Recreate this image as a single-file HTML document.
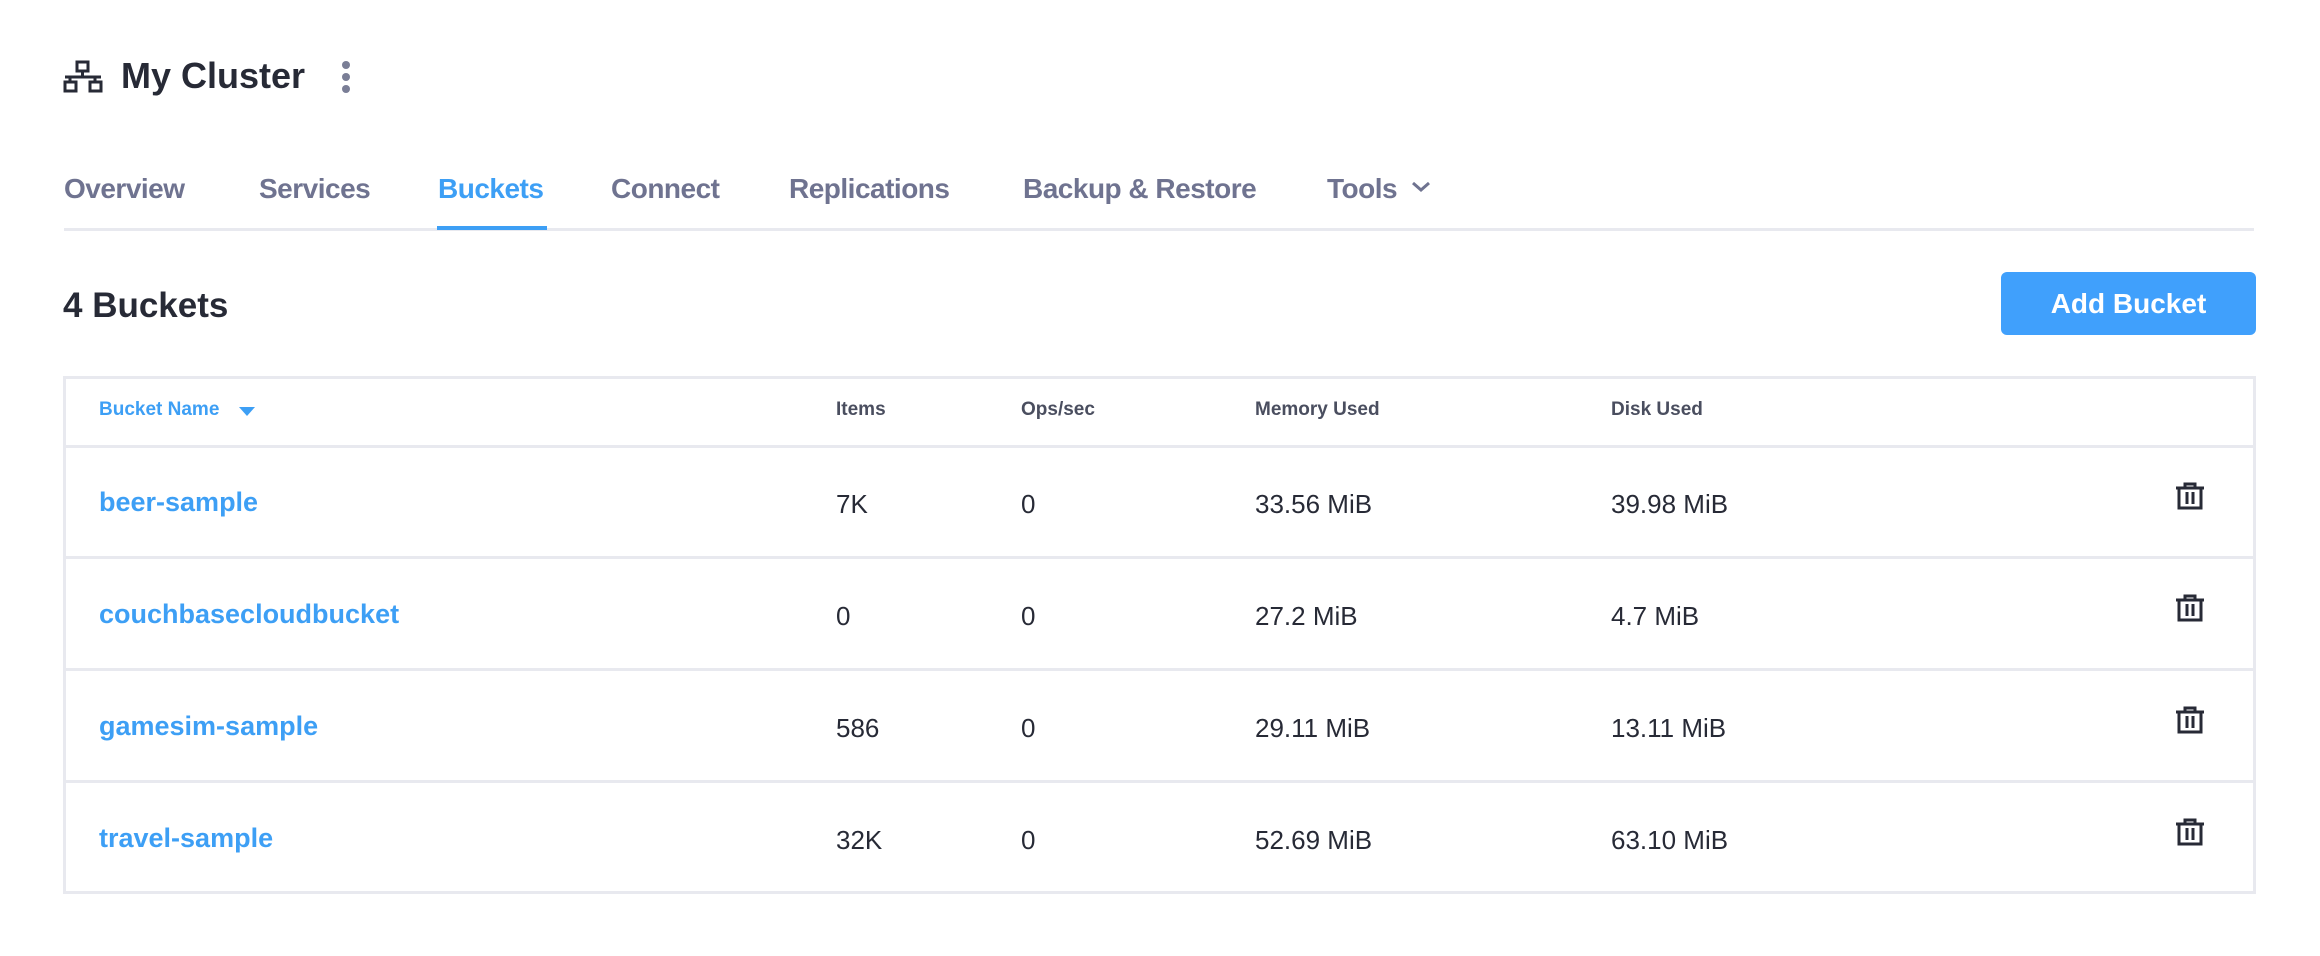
<!DOCTYPE html>
<html><head><meta charset="utf-8"><style>
*{margin:0;padding:0;box-sizing:border-box}
body{width:2320px;height:956px;background:#fff;font-family:"Liberation Sans",sans-serif;position:relative;overflow:hidden;color:#272a36}
.a{position:absolute;white-space:nowrap}
.nav{font-size:28px;color:#6f7390;top:171px;line-height:36px;font-weight:bold;letter-spacing:-0.5px}
.hd{font-size:19px;color:#4a4e5f;font-weight:bold;top:398px;line-height:24px}
.ln{position:absolute;left:64px;width:2190px;height:3px;background:#e8e9ef}
.nm{font-size:27px;color:#3d9ff5;font-weight:bold;left:99px}
.c{font-size:26px;color:#272a36}
</style></head><body>
<svg class="a" style="left:63px;top:60px" width="40" height="34" viewBox="0 0 40 34" fill="none" stroke="#272a36" stroke-width="3"><rect x="14" y="2" width="11" height="9"/><path d="M19.5 11v6M2 17h36M7 17v5M32 17v5"/><rect x="2" y="22" width="11" height="9"/><rect x="27" y="22" width="11" height="9"/></svg>
<div class="a" style="left:121px;top:52px;font-size:36px;font-weight:bold;line-height:48px;color:#272a36">My Cluster</div>
<svg class="a" style="left:340px;top:60px" width="12" height="34"><circle cx="6" cy="5" r="4" fill="#7a7e96"/><circle cx="6" cy="17" r="4" fill="#7a7e96"/><circle cx="6" cy="29" r="4" fill="#7a7e96"/></svg>
<div class="a nav" style="left:64px">Overview</div>
<div class="a nav" style="left:259px">Services</div>
<div class="a nav" style="left:438px;color:#3d9ff5">Buckets</div>
<div class="a nav" style="left:611px">Connect</div>
<div class="a nav" style="left:789px">Replications</div>
<div class="a nav" style="left:1023px">Backup &amp; Restore</div>
<div class="a nav" style="left:1327px">Tools</div>
<svg class="a" style="left:1410px;top:180px" width="22" height="14"><path d="M3 3l8 7 8-7" fill="none" stroke="#6f7390" stroke-width="3"/></svg>
<div class="a" style="left:64px;top:228px;width:2190px;height:3px;background:#e8e9ef"></div>
<div class="a" style="left:437px;top:226px;width:110px;height:4px;background:#3d9ff5"></div>
<div class="a" style="left:63px;top:284px;font-size:35px;font-weight:bold;line-height:44px">4 Buckets</div>
<div class="a" style="left:2001px;top:272px;width:255px;height:63px;background:#40a0fc;border-radius:6px;color:#fff;font-size:28px;font-weight:bold;text-align:center;line-height:63px">Add Bucket</div>
<div class="a" style="left:63px;top:376px;width:2193px;height:518px;border:3px solid #e8e9ef"></div>
<div class="a hd" style="left:99px;color:#3d9ff5">Bucket Name</div>
<svg class="a" style="left:239px;top:407px" width="16" height="10"><path d="M0 0h16L8 9z" fill="#3d9ff5"/></svg>
<div class="a hd" style="left:836px">Items</div>
<div class="a hd" style="left:1021px">Ops/sec</div>
<div class="a hd" style="left:1255px">Memory Used</div>
<div class="a hd" style="left:1611px">Disk Used</div>
<div class="ln" style="top:445px"></div>
<div class="ln" style="top:556px"></div>
<div class="ln" style="top:668px"></div>
<div class="ln" style="top:780px"></div>

<div class="a nm" style="top:487px">beer-sample</div>
<div class="a c" style="left:836px;top:489px">7K</div><div class="a c" style="left:1021px;top:489px">0</div><div class="a c" style="left:1255px;top:489px">33.56 MiB</div><div class="a c" style="left:1611px;top:489px">39.98 MiB</div>
<div class="a nm" style="top:599px">couchbasecloudbucket</div>
<div class="a c" style="left:836px;top:601px">0</div><div class="a c" style="left:1021px;top:601px">0</div><div class="a c" style="left:1255px;top:601px">27.2 MiB</div><div class="a c" style="left:1611px;top:601px">4.7 MiB</div>
<div class="a nm" style="top:711px">gamesim-sample</div>
<div class="a c" style="left:836px;top:713px">586</div><div class="a c" style="left:1021px;top:713px">0</div><div class="a c" style="left:1255px;top:713px">29.11 MiB</div><div class="a c" style="left:1611px;top:713px">13.11 MiB</div>
<div class="a nm" style="top:823px">travel-sample</div>
<div class="a c" style="left:836px;top:825px">32K</div><div class="a c" style="left:1021px;top:825px">0</div><div class="a c" style="left:1255px;top:825px">52.69 MiB</div><div class="a c" style="left:1611px;top:825px">63.10 MiB</div>

<svg width="0" height="0" style="position:absolute"><defs><g id="t" fill="none" stroke="#272a36" stroke-width="3"><path d="M1 7h28M10 7V3h10v4M4 7v20h22V7M12 11v12M18 11v12"/></g></defs></svg>
<svg class="a" style="left:2175px;top:481px" width="30" height="30"><use href="#t"/></svg>
<svg class="a" style="left:2175px;top:593px" width="30" height="30"><use href="#t"/></svg>
<svg class="a" style="left:2175px;top:705px" width="30" height="30"><use href="#t"/></svg>
<svg class="a" style="left:2175px;top:817px" width="30" height="30"><use href="#t"/></svg>
</body></html>
